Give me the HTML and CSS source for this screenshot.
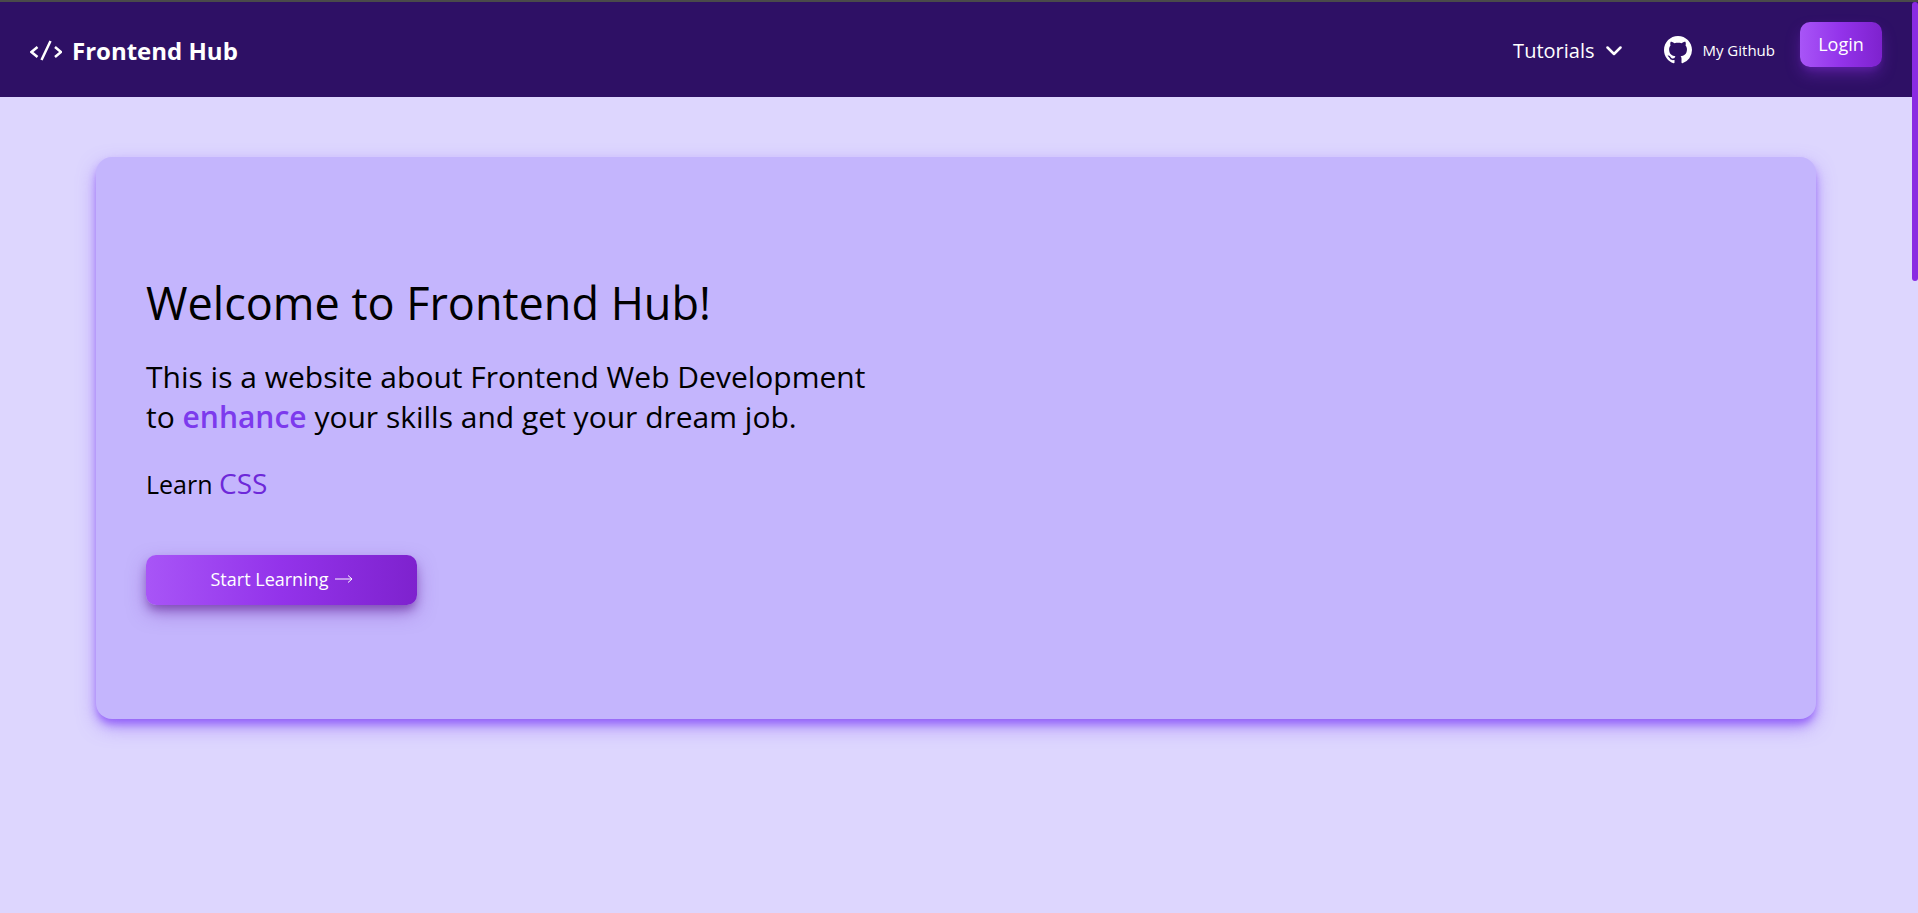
FILE: index.html
```html
<!DOCTYPE html>
<html lang="en">
<head>
<meta charset="utf-8">
<title>Frontend Hub</title>
<link rel="stylesheet" href="styles.css">
</head>
<body>
<header class="navbar">
  <a class="brand" href="#">
    <svg class="brand-icon" viewBox="0 0 32 22" aria-hidden="true"><path d="M7.5 7 1.5 12l6 5M20.500 1 11.500 20M25 7l6 5-6 5"/></svg>
    <span>Frontend Hub</span>
  </a>
  <nav class="menu">
    <button class="tutorials" type="button">
      <span>Tutorials</span>
      <svg class="chevron" viewBox="0 0 16 10" aria-hidden="true"><path d="m1.500 1.500 6.500 6.500 6.500-6.500"/></svg>
    </button>
    <a class="github" href="#">
      <svg class="github-icon" viewBox="0 0 16 16" aria-hidden="true"><path d="M8 0C3.580 0 0 3.580 0 8c0 3.540 2.290 6.530 5.470 7.590.4.070.55-.17.55-.38 0-.19-.01-.82-.01-1.490-2.010.37-2.530-.49-2.690-.94-.09-.23-.48-.94-.82-1.130-.28-.15-.68-.52-.01-.53.63-.01 1.080.58 1.230.82.72 1.210 1.870.87 2.330.66.070-.52.28-.87.51-1.070-1.780-.2-3.640-.89-3.640-3.950 0-.87.31-1.590.82-2.150-.08-.2-.36-1.020.08-2.120 0 0 .67-.21 2.200.82.64-.18 1.320-.27 2-.27s1.360.09 2 .27c1.530-1.040 2.200-.82 2.200-.82.44 1.100.16 1.920.08 2.120.51.56.82 1.270.82 2.150 0 3.070-1.870 3.750-3.650 3.950.29.25.54.73.54 1.480 0 1.070-.01 1.930-.01 2.200 0 .21.15.46.55.38A8.010 8.010 0 0 0 16 8c0-4.420-3.580-8-8-8Z"/></svg>
      <span>My Github</span>
    </a>
    <button class="button login" type="button">Login</button>
  </nav>
</header>
<main class="page">
  <section class="hero">
    <h1 class="title">Welcome to Frontend Hub!</h1>
    <p class="lead">This is a website about Frontend Web Development<br>to <strong class="accent">enhance</strong> your skills and get your dream job.</p>
    <p class="learn">Learn <span class="topic">CSS</span></p>
    <button class="button start" type="button">Start Learning
      <svg class="arrow" viewBox="0 0 18 10" aria-hidden="true"><path d="M0 5h17M13 1.500 17 5l-4 3.500"/></svg>
    </button>
  </section>
</main>
<div class="scroll-thumb" aria-hidden="true"></div>
</body>
</html>
```
FILE: styles.css
```css
* { box-sizing: border-box; }

body {
  margin: 0;
  min-height: 100vh;
  padding-right: 6px;
  background: #ddd6fe;
  color: #000;
  font-family: "Comic Sans MS", "Open Sans", sans-serif;
}

button { border: 0; font-family: inherit; cursor: pointer; }
a { color: inherit; text-decoration: none; }

.navbar {
  display: flex;
  align-items: center;
  justify-content: space-between;
  height: 97px;
  margin-right: -6px;
  padding: 0 36px 0 30px;
  border-top: 2px solid #4a4a4a;
  background: #2e1065;
  color: #fff;
}

.brand { display: flex; align-items: center; gap: 10px; padding-top: 2px; font-size: 24px; font-weight: 700; }
.brand-icon { width: 32px; height: 22px; fill: none; stroke: #fff; stroke-width: 2.500; }
.menu { display: flex; align-items: center; }
.tutorials { display: flex; align-items: center; gap: 12px; margin-right: 42px; padding: 2px 0 0; background: none; color: #fff; font-size: 20px; }
.chevron { width: 16px; height: 10px; fill: none; stroke: #fff; stroke-width: 2.500; stroke-linecap: round; stroke-linejoin: round; }
.github { display: flex; align-items: center; gap: 10px; margin-right: 25px; font-size: 15px; }
.github-icon { width: 28px; height: 28px; fill: #fff; }

.button {
  border-radius: 10px;
  background: linear-gradient(to right, #a855f7, #9333ea, #7e22ce);
  color: #fff;
  font-size: 18px;
}
.login { width: 82px; height: 45px; margin-bottom: 10px; padding: 0 0 2px; box-shadow: 0 8px 16px -2px rgba(147, 51, 234, 0.400), 0 4px 6px -2px rgba(147, 51, 234, 0.200); }

.page { padding: 60px 96px; }
.hero {
  padding: 110px 50px 114px;
  border-radius: 16px;
  background: #c4b5fd;
  box-shadow: 0 8px 20px -2px rgba(139, 92, 246, 0.700), 0 6px 8px -2px rgba(139, 76, 250, 0.800);
}
.title { margin: 0; font-size: 45px; font-weight: 400; line-height: 71px; }
.lead { margin: 19px 0 0; font-size: 30px; line-height: 40px; }
.accent { color: #7c3aed; font-weight: 600; }
.learn { margin: 28px 0 0; font-size: 25px; line-height: 36px; }
.topic { color: #6d28d9; font-size: 28px; }
.start {
  display: flex;
  align-items: center;
  justify-content: center;
  gap: 6px;
  width: 271px;
  height: 50px;
  margin-top: 53px;
  padding: 0 0 2px;
  box-shadow: 0 8px 20px -2px rgba(107, 33, 168, 0.500), 0 6px 10px -2px rgba(88, 28, 135, 0.500);
}
.arrow { width: 18px; height: 10px; fill: none; stroke: #fff; stroke-width: 1; }

.scroll-thumb {
  position: fixed;
  top: 2px;
  right: 0;
  width: 6px;
  height: 279px;
  border-radius: 3px;
  background: #8a2be2;
}
```
